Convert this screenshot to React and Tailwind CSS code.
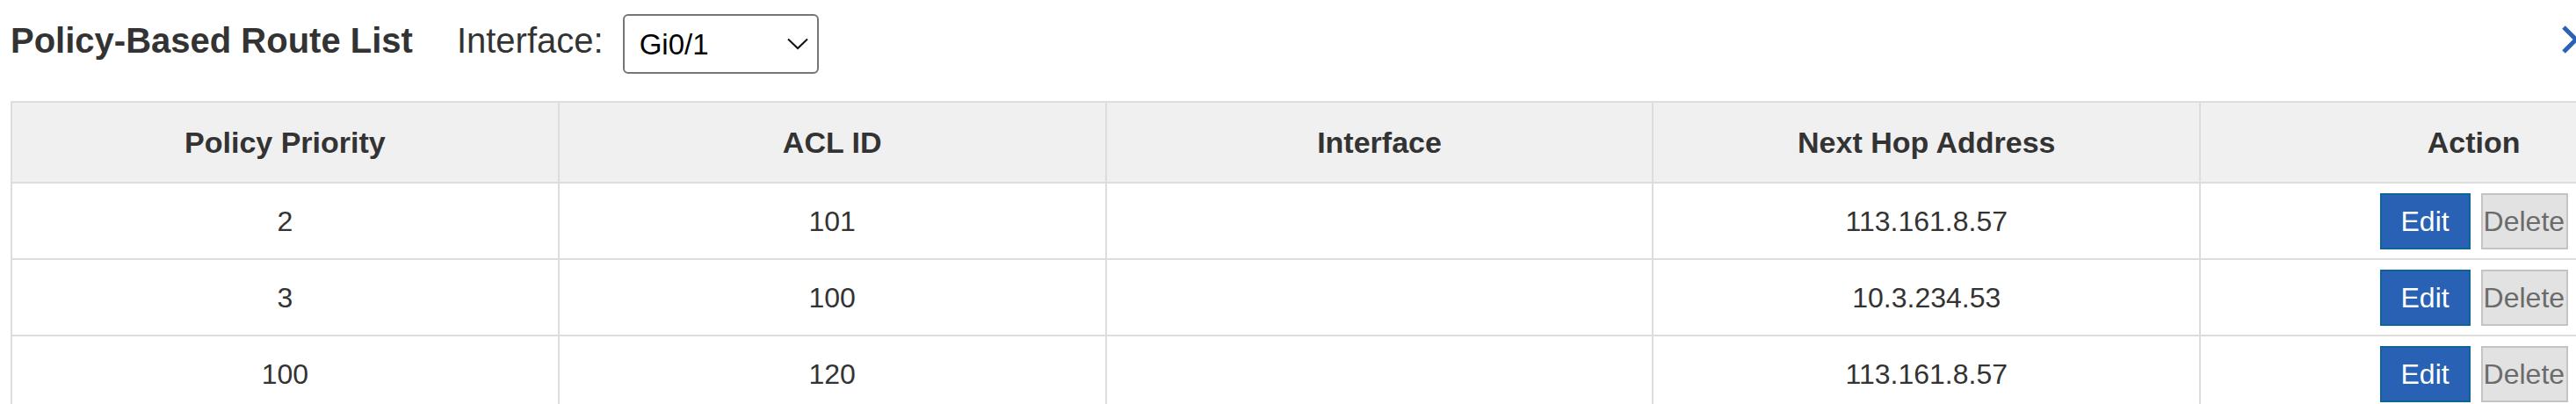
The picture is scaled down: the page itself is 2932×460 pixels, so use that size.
export default function App() {
  const rows = [
    { p: "2", acl: "101", iface: "", hop: "113.161.8.57" },
    { p: "3", acl: "100", iface: "", hop: "10.3.234.53" },
    { p: "100", acl: "120", iface: "", hop: "113.161.8.57" },
  ];
  const th = "border-2 border-[#dddddd] bg-[#f0f0f0] h-[92px] text-[34px] font-bold text-[#333333] text-center align-middle";
  const td = "border-2 border-[#dddddd] h-[87px] text-[32px] text-[#333333] text-center align-middle";
  return (
    <div className="w-[3140px] bg-white font-['Liberation_Sans',Arial,sans-serif] text-[#333333]">
      <div className="flex items-center w-[2936px] pl-[12px] pt-[16px]">
        <h1 className="text-[40px] leading-[40px] font-bold text-[#333333] mb-[8px]">Policy-Based Route List</h1>
        <span className="ml-[50px] text-[40px] leading-[40px] text-[#333333] mb-[8px]">Interface:</span>
        <div className="ml-[22px] flex items-center justify-between w-[223px] h-[68px] border-2 border-[#767676] rounded-[6px] pl-[17px] pr-[10px] bg-white">
          <span className="text-[33px] leading-[33px] text-black">Gi0/1</span>
          <svg width="24" height="14" viewBox="0 0 24 14" className="block">
            <polyline points="1,1.5 12,12 23,1.5" fill="none" stroke="#111111" strokeWidth="2" />
          </svg>
        </div>
        <svg width="24" height="36" viewBox="0 0 24 36" className="ml-auto block mb-[10px]">
          <polyline points="6,4 20,18 6,32" fill="none" stroke="#2a62b4" strokeWidth="5" />
        </svg>
      </div>
      <table className="mt-[31px] ml-[12px] w-[3116px] table-fixed border-collapse">
        <thead>
          <tr>
            <th className={th}>Policy Priority</th>
            <th className={th}>ACL ID</th>
            <th className={th}>Interface</th>
            <th className={th}>Next Hop Address</th>
            <th className={th}>Action</th>
          </tr>
        </thead>
        <tbody>
          {rows.map((r, i) => (
            <tr key={i}>
              <td className={td}>{r.p}</td>
              <td className={td}>{r.acl}</td>
              <td className={td}>{r.iface}</td>
              <td className={td}>{r.hop}</td>
              <td className={td}>
                <div className="flex items-center justify-center gap-[12px]">
                  <button className="w-[103px] h-[64px] bg-[#2962b4] border-2 border-[#0d6499] text-white text-[32px] leading-[32px] text-center">Edit</button>
                  <button className="w-[99px] h-[64px] bg-[#e2e2e2] border-2 border-[#c4c4c4] text-[#6b6b6b] text-[32px] leading-[32px] text-left pl-[1px] overflow-hidden whitespace-nowrap">Delete</button>
                </div>
              </td>
            </tr>
          ))}
        </tbody>
      </table>
    </div>
  );
}
